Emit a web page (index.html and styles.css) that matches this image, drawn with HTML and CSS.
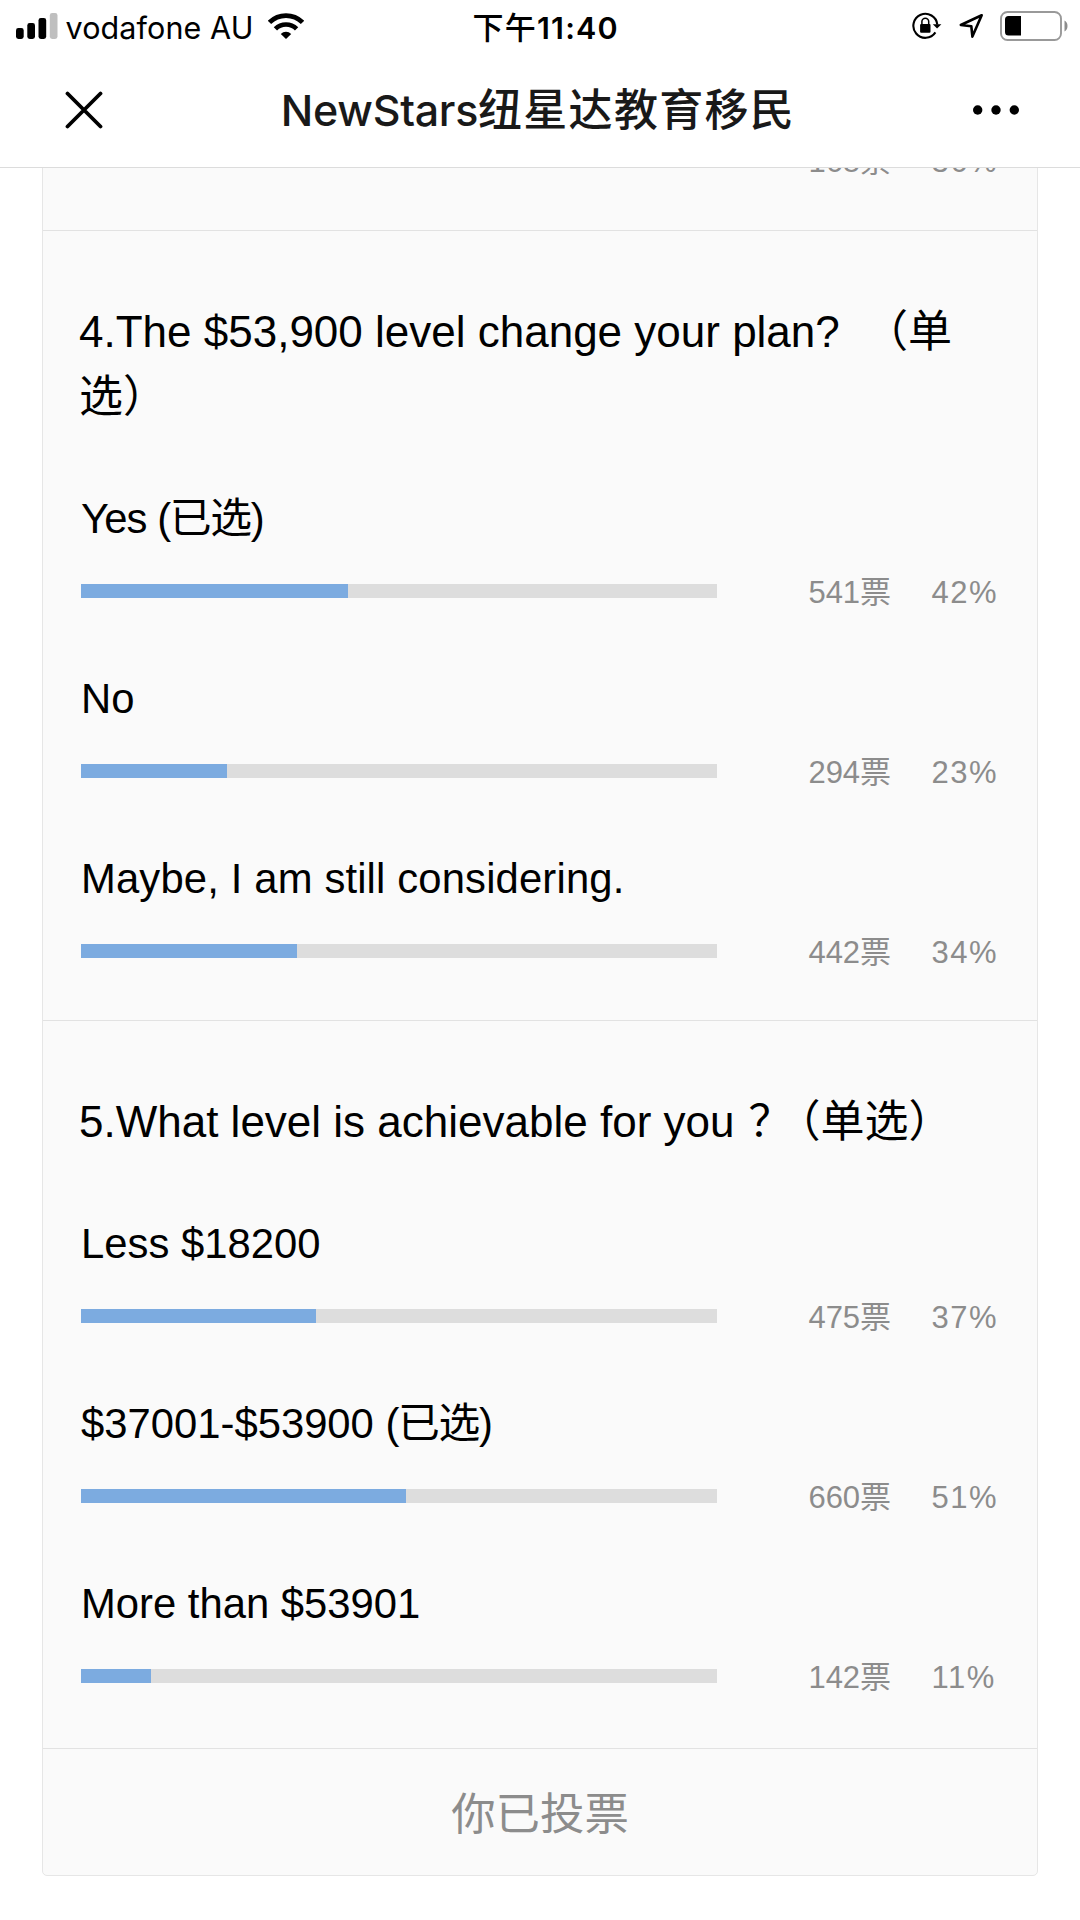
FILE: index.html
```html
<!DOCTYPE html>
<html lang="zh-CN">
<head>
  <meta charset="UTF-8">
  <title>NewStars纽星达教育移民</title>
  <link rel="stylesheet" href="styles.css">
</head>
<body>
  <div class="status">
    <div class="status-left">
      <svg class="signal" width="42" height="26" viewBox="0 0 42 26">
        <rect x="0" y="15" width="7.7" height="11" rx="2.4"/>
        <rect x="11.3" y="10" width="7.7" height="16" rx="2.4"/>
        <rect x="22.5" y="5" width="7.7" height="21" rx="2.4"/>
        <rect x="33.8" y="0" width="7.7" height="26" rx="2.4" fill="#bfbfbf"/>
      </svg>
      <span class="carrier">vodafone AU</span>
      <svg class="wifi" width="36" height="26" viewBox="0 0 36 26">
        <g fill="none" stroke="#000" stroke-width="4.7">
          <path d="M1.5 9.4A23.5 23.5 0 0 1 34.5 9.4"/>
          <path d="M7.4 15.9A15 15 0 0 1 28.6 15.9"/>
        </g>
        <path d="M18 26L12.8 20.9A7.4 7.4 0 0 1 23.2 20.9Z"/>
      </svg>
    </div>
    <div class="time"><span class="noon">下午</span>11:40</div>
    <div class="status-right">
      <svg class="lock" width="30" height="28" viewBox="0 0 30 28">
        <path d="M23.4 20.4A12 12 0 1 1 25.3 12.6" fill="none" stroke="#000" stroke-width="2.1"/>
        <path d="M20.8 12.2h8.6l-4.3 4.4z"/>
        <rect x="8.1" y="12.1" width="10.4" height="8.6" rx="1"/>
        <path d="M9.9 13V9.6a3.4 3.4 0 0 1 6.8 0V13" fill="none" stroke="#000" stroke-width="1.5"/>
      </svg>
      <svg class="location" width="25" height="26" viewBox="0 0 25 26">
        <path d="M22.7 2.2L1.8 12L12.3 13.2L13.4 23.6Z" fill="none" stroke="#000" stroke-width="2.6" stroke-linejoin="round"/>
      </svg>
      <svg class="battery" width="69" height="30" viewBox="0 0 69 30">
        <rect x="1" y="1" width="60" height="28" rx="6.5" fill="none" stroke="#999" stroke-width="1.9"/>
        <path d="M64.5 9.5c4 2 4 9 0 11z" fill="#8c8c8c"/>
        <path d="M21 5v19.6H8.5a3.5 3.5 0 0 1-3.5-3.5V8.5A3.5 3.5 0 0 1 8.5 5z"/>
      </svg>
    </div>
  </div>
  <div class="nav">
    <svg class="close" width="38" height="38" viewBox="0 0 38 38">
      <path d="M2.5 2.5L35.5 35.5M35.5 2.5L2.5 35.5" stroke="#000" stroke-width="3.8" stroke-linecap="round"/>
    </svg>
    <h1 class="nav-title">NewStars<span class="nav-title-cn">纽星达教育移民</span></h1>
    <svg class="more" width="46" height="10" viewBox="0 0 46 10">
      <circle cx="4.7" cy="5" r="4.7"/>
      <circle cx="23" cy="5" r="4.7"/>
      <circle cx="41.3" cy="5" r="4.7"/>
    </svg>
  </div>

  <div class="page">
    <div class="vote">
      <div class="question question-prev">
        <div class="result">
          <div class="bar"><div class="bar-in" style="width:36%"></div></div>
          <span class="count">168票</span><span class="percent">36%</span>
        </div>
      </div>

      <div class="question">
        <h2 class="question-title">4.The $53,900 level change your plan? <span class="gap">&#12288;</span>（单选）</h2>
        <ul class="options">
          <li>
            <p class="label tight">Yes <span class="chosen">(已选)</span></p>
            <div class="result">
              <div class="bar"><div class="bar-in" style="width:42%"></div></div>
              <span class="count">541票</span><span class="percent">42%</span>
            </div>
          </li>
          <li>
            <p class="label">No</p>
            <div class="result">
              <div class="bar"><div class="bar-in" style="width:23%"></div></div>
              <span class="count">294票</span><span class="percent">23%</span>
            </div>
          </li>
          <li>
            <p class="label wide">Maybe, I am still considering.</p>
            <div class="result">
              <div class="bar"><div class="bar-in" style="width:34%"></div></div>
              <span class="count">442票</span><span class="percent">34%</span>
            </div>
          </li>
        </ul>
      </div>

      <div class="question question-last">
        <h2 class="question-title">5.What level is achievable for you<span class="mark">？</span>（单选）</h2>
        <ul class="options">
          <li>
            <p class="label">Less $18200</p>
            <div class="result">
              <div class="bar"><div class="bar-in" style="width:37%"></div></div>
              <span class="count">475票</span><span class="percent">37%</span>
            </div>
          </li>
          <li>
            <p class="label">$37001-$53900 <span class="chosen">(已选)</span></p>
            <div class="result">
              <div class="bar"><div class="bar-in" style="width:51%"></div></div>
              <span class="count">660票</span><span class="percent">51%</span>
            </div>
          </li>
          <li>
            <p class="label">More than $53901</p>
            <div class="result">
              <div class="bar"><div class="bar-in" style="width:11%"></div></div>
              <span class="count">142票</span><span class="percent">11%</span>
            </div>
          </li>
        </ul>
      </div>

      <div class="vote-foot">你已投票</div>
    </div>
  </div>
</body>
</html>
```

FILE: styles.css
```css
body{
  margin: 0;
  background: #fff;
  color: #000;
  font-family: "Liberation Sans", "Noto Sans CJK SC", sans-serif;
}
h1, h2, p, ul{
  margin: 0;
  padding: 0;
  font-weight: normal;
}
ul{
  list-style: none;
}
svg{
  display: block;
  flex: none;
}

/* status bar */
.status{
  display: grid;
  grid-template-columns: 1fr auto 1fr;
  align-items: center;
  height: 52px;
  padding: 0 11px 0 15.5px;
  font-family: Inter, "Noto Sans CJK SC", sans-serif;
  font-size: 30.5px;
  line-height: 49px;
}
.status-left, .status-right{
  display: flex;
  align-items: center;
}
.status-right{
  justify-content: flex-end;
}
.carrier{
  margin: 3px 15px 0 8px;
  letter-spacing: 0.1px;
}
.time{
  padding: 3px 0 0 7px;
  font-weight: 600;
  letter-spacing: 1.2px;
}
.noon{
  font-size: 31px;
  font-weight: 500;
}
.location{
  margin: 0 16px 0 17px;
}

/* title bar */
.nav{
  display: flex;
  align-items: center;
  justify-content: space-between;
  height: 115px;
  padding: 0 61px 0 65px;
  border-bottom: 1px solid #dcdcdc;
}
.nav-title{
  color: #191919;
  font-family: Inter, "Noto Sans CJK SC", sans-serif;
  font-size: 43px;
  font-weight: 500;
  line-height: 60px;
  letter-spacing: -0.3px;
}
.nav-title-cn{
  font-size: 44px;
  letter-spacing: 1.3px;
}

/* vote card, scrolled part way under the title bar */
.page{
  height: 1752px;
  overflow: hidden;
}
.vote{
  width: 994px;
  margin: -27px 0 0 42px;
  border: 1px solid #e6e6e6;
  border-radius: 5px;
  background: #fafafa;
}
.question{
  padding: 68.4px 36px 50.6px;
  border-bottom: 1px solid #e2e2e2;
}
.question-prev{
  padding: 0 36px 51.6px;
}
.question-last{
  padding-bottom: 53.6px;
}
.question-title{
  margin-bottom: 65px;
  font-size: 44px;
  line-height: 65px;
}
.gap{
  letter-spacing: -10px;
}
.mark{
  padding-left: 14px;
  letter-spacing: -16px;
}
.options{
  display: flex;
  flex-direction: column;
  gap: 65px;
}
.label{
  margin: 0 0 30px 2px;
  padding-top: 1px;
  font-size: 41.8px;
  line-height: 48px;
}
.tight{
  letter-spacing: -0.9px;
}
.wide{
  letter-spacing: 0.15px;
}
.chosen{
  letter-spacing: -1.3px;
}
.result{
  display: flex;
  align-items: center;
  height: 36px;
  margin-left: 2px;
  color: #8c8c8c;
  font-size: 31px;
  line-height: 36px;
}
.bar{
  width: 636.4px;
  height: 13.3px;
  background: #ddd;
}
.bar-in{
  height: 100%;
  background: #7cabe0;
}
.count, .percent{
  padding-top: 4px;
}
.count{
  width: 123px;
  margin-left: 91px;
}
.percent{
  letter-spacing: 1.6px;
}
.vote-foot{
  height: 123px;
  padding-top: 3px;
  color: #8c8c8c;
  font-size: 44.4px;
  line-height: 126px;
  text-align: center;
}
```
